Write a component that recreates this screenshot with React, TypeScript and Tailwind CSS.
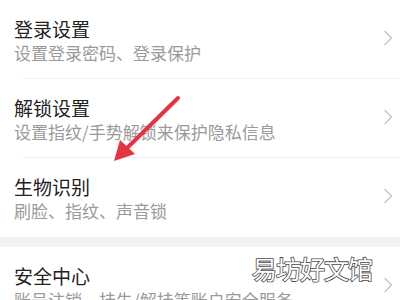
type Item = {
  title: string
  desc: string
}

const group1: Item[] = [
  { title: "登录设置", desc: "设置登录密码、登录保护" },
  { title: "解锁设置", desc: "设置指纹/手势解锁来保护隐私信息" },
  { title: "生物识别", desc: "刷脸、指纹、声音锁" },
]

const group2: Item[] = [
  { title: "安全中心", desc: "账号注销、挂失/解挂等账户安全服务" },
]

function Chevron() {
  return (
    <svg className="mt-[13px] shrink-0" width="10" height="16" viewBox="0 0 10 16">
      <polyline points="1.5,1 8.5,8 1.5,15" fill="none" stroke="#c6c6c6" strokeWidth="1.4" />
    </svg>
  )
}

function Row({ item, last }: { item: Item; last?: boolean }) {
  return (
    <div className="relative flex h-[79px] shrink-0 items-start justify-between pl-[14px] pr-[7px] pt-[17px]">
      <div className="flex flex-col">
        <p className="text-[19px] leading-[24px] text-[#222]">{item.title}</p>
        <p className="whitespace-nowrap text-[17px] leading-[24px] text-[#9a9a9a]">{item.desc}</p>
      </div>
      <Chevron />
      {!last && <div className="absolute bottom-0 left-[22px] right-0 h-px bg-[#f0f0f0]" />}
    </div>
  )
}

export default function App() {
  return (
    <div className="relative flex h-[300px] w-[400px] flex-col overflow-hidden bg-white font-['Noto_Sans_CJK_SC',sans-serif]">
      {group1.map((item, i) => (
        <Row key={item.title} item={item} last={i === group1.length - 1} />
      ))}
      <div className="h-[10px] shrink-0 bg-[#f2f2f2]" />
      {group2.map((item) => (
        <Row key={item.title} item={item} last />
      ))}

      {/* red arrow annotation */}
      <svg className="absolute left-0 top-0" width="400" height="300" viewBox="0 0 400 300">
        <line x1="178" y1="98" x2="126" y2="149" stroke="#e3343f" strokeWidth="4" strokeLinecap="round" />
        <polygon points="114,161 120,140 135,154" fill="#e3343f" />
      </svg>

      {/* watermark */}
      <span className="absolute left-[252px] top-[252px] text-[25px] leading-[32px] tracking-[-1px] text-white [-webkit-text-stroke:1.6px_#4a4a4a] [paint-order:stroke_fill]">
        易坊好文馆
      </span>
    </div>
  )
}
